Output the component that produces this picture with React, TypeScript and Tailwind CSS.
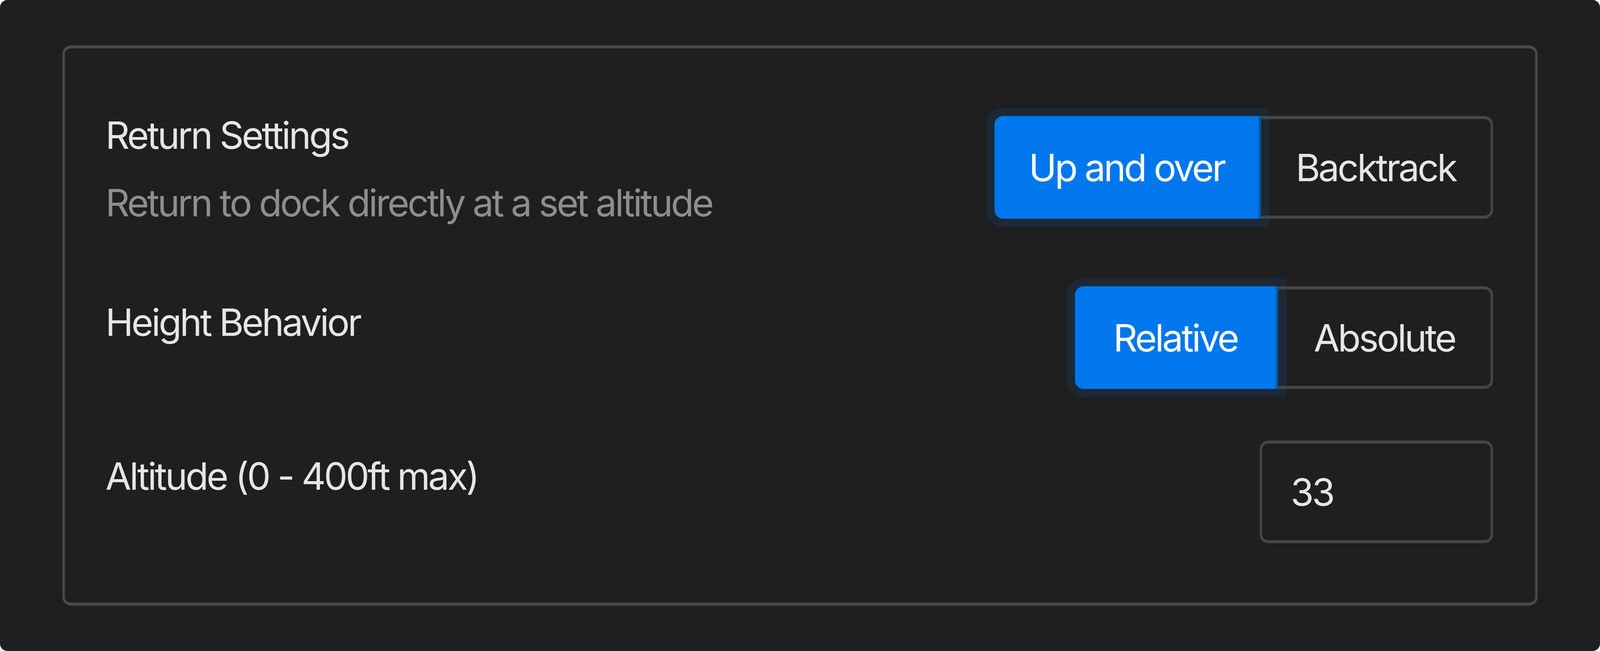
const font = { fontFamily: 'Inter, "Liberation Sans", sans-serif' }

function Segmented({
  options,
  widths,
}: {
  options: [string, string]
  widths: [string, string]
}) {
  return (
    <div className="flex">
      <button
        className={`${widths[0]} flex h-[263px] shrink-0 items-center justify-center rounded-l-[22px] border-r-[6px] border-[#0a58a6] bg-[#0077ed] text-white shadow-[0_0_0_21px_#1c2836]`}
      >
        {options[0]}
      </button>
      <button
        className={`${widths[1]} flex h-[263px] shrink-0 items-center justify-center rounded-r-[22px] border-x-[6px] border-y-[8px] border-l-0 border-[#464646] text-[#e6e6e6]`}
      >
        {options[1]}
      </button>
    </div>
  )
}

export default function App() {
  return (
    <div className="h-screen w-screen overflow-hidden bg-white" style={font}>
      <div className="flex h-full flex-col rounded-[19px] bg-[#1f1f1f] px-[160px] py-[116px]">
        <section className="flex flex-1 flex-col rounded-[22px] border-x-[6px] border-y-[8px] border-[#4a4a4a] pl-[104px] pr-[108px] pt-[164px] text-[96px] leading-[116px] tracking-[-0.05em] text-[#e6e6e6]">
          <div className="flex items-start justify-between">
            <div>
              <p>Return Settings</p>
              <p className="mt-[57px] text-[#8e8e8e]">Return to dock directly at a set altitude</p>
            </div>
            <div className="mt-[9px]">
              <Segmented options={['Up and over', 'Backtrack']} widths={['w-[682px]', 'w-[594px]']} />
            </div>
          </div>

          <div className="mt-[156px] flex items-start justify-between">
            <p className="mt-[34px]">Height Behavior</p>
            <Segmented options={['Relative', 'Absolute']} widths={['w-[520px]', 'w-[550px]']} />
          </div>

          <div className="mt-[132px] flex items-start justify-between">
            <p className="mt-[33px]">Altitude (0 - 400ft max)</p>
            <input
              defaultValue="33"
              className="h-[263px] w-[597px] rounded-[22px] border-x-[6px] border-y-[8px] border-[#464646] bg-transparent pl-[73px] tracking-[-0.05em] text-[#e6e6e6] outline-none"
            />
          </div>
        </section>
      </div>
    </div>
  )
}
